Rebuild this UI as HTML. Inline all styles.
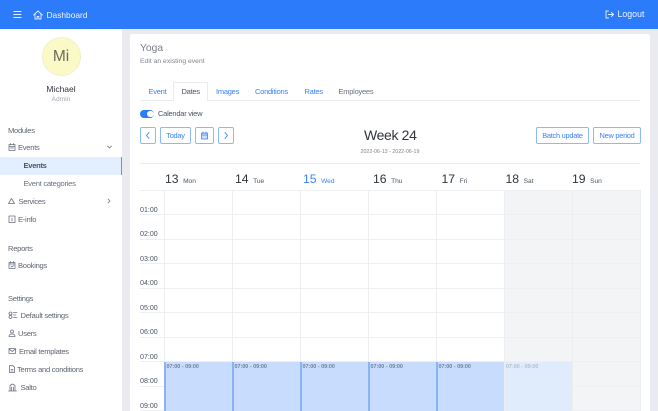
<!DOCTYPE html>
<html><head><meta charset="utf-8">
<style>
*{box-sizing:border-box}
html,body{margin:0;padding:0;width:658px;height:411px;overflow:hidden;background:#e9ebf0;font-family:"Liberation Sans",sans-serif}
#w{position:absolute;left:0;top:0;width:658px;height:411px;overflow:hidden;filter:blur(.35px)}
.a{position:absolute;white-space:nowrap}
.t{position:absolute;white-space:nowrap;line-height:12px;height:12px}
svg{position:absolute;fill:none;stroke-linecap:round;stroke-linejoin:round}
.side{color:#5f6672;font-size:7.600px;letter-spacing:-.28px}
.tab{font-size:7.500px;letter-spacing:-.25px;top:86px}
.btn{position:absolute;border:1px solid #8db8fb;border-radius:2px;color:#3b82f6;font-size:7.400px;letter-spacing:-.25px;text-align:center;background:#fff;height:17px;line-height:15px;white-space:nowrap}
.v{position:absolute;top:190px;width:1px;height:221px;background:#edeef1}
.h{position:absolute;left:140px;width:500px;height:1px;background:#eeeff2}
.tm{position:absolute;left:140px;font-size:7.100px;color:#4b5563;line-height:10px;white-space:nowrap}
.n{position:absolute;top:171px;font-size:12.200px;color:#2f343b;line-height:16px;white-space:nowrap}
.n small{font-size:6.600px;color:#4b5563;margin-left:4.500px}
.ev{position:absolute;top:362px;height:49px;width:68px;background:#c8dcfd;border-left:2px solid #8ab2f5;font-size:5.400px;font-weight:bold;color:#6f7f99;padding:1px 0 0 .5px;line-height:8px;white-space:nowrap}
</style></head><body><div id="w">
<div class="a" style="left:0;top:0;width:658px;height:29px;background:#2b7bfb"></div>
<svg style="left:13px;top:10px" width="9" height="9" stroke="#e8f0ff" stroke-width="1.100"><path d="M.8 1.500H8M.8 4.500H8M.8 7.500H8"/></svg>
<svg style="left:33px;top:10px" width="10" height="10" stroke="#e8f0ff" stroke-width=".9"><path d="M.7 5 5 1l4.300 4M2 4v5h2.200V6.500h1.600V9H8V4"/></svg>
<div class="t" style="left:46.500px;top:9px;color:#eef4ff;font-size:8.400px">Dashboard</div>
<svg style="left:605px;top:10px" width="9" height="9" stroke="#e8f0ff" stroke-width=".9"><path d="M3.500 1H1v7h2.500M3.500 4.500H8.500M6.500 2.500l2 2-2 2"/></svg>
<div class="t" style="left:617.500px;top:8px;color:#eef4ff;font-size:8.800px">Logout</div>

<div class="a" style="left:0;top:29px;width:122px;height:382px;background:#fff"></div>
<div class="a" style="left:41.500px;top:37px;width:39px;height:39px;border-radius:50%;background:#fbfac6;border:1px solid #f0efcc;text-align:center;line-height:37px;font-size:15.500px;color:#6b6b60">Mi</div>
<div class="t" style="left:0;width:122px;text-align:center;top:83px;font-size:8.500px;color:#30343b">Michael</div>
<div class="t" style="left:0;width:122px;text-align:center;top:93.500px;font-size:6.600px;color:#a0a5ad">Admin</div>
<div class="t side" style="left:8px;top:125px">Modules</div>
<svg style="left:7.500px;top:143px" width="8" height="8" stroke="#6b7280" stroke-width=".8"><path d="M1 1.500h6v6H1zM1 3.500h6M2.500.5v1.500M5.500.5v1.500M2.500 5h3"/></svg>
<div class="t side" style="left:18px;top:142px">Events</div>
<svg style="left:106px;top:144px" width="7" height="6" stroke="#6b7280" stroke-width=".8"><path d="M1.500 2 3.500 4 5.500 2"/></svg>
<div class="a" style="left:0;top:156.500px;width:122px;height:18px;background:#e3eefe;border-right:1.500px solid #5b95f7"></div>
<div class="t side" style="left:23.500px;top:160px;color:#4b5563;font-weight:bold;letter-spacing:-.3px">Events</div>
<div class="t side" style="left:23.500px;top:178px;color:#6b7280">Event categories</div>
<svg style="left:7px;top:197px" width="9" height="8" stroke="#6b7280" stroke-width=".8"><path d="M4.500 1.500 7.500 6.500H1.500z"/></svg>
<div class="t side" style="left:18.500px;top:196px">Services</div>
<svg style="left:106px;top:197px" width="6" height="8" stroke="#6b7280" stroke-width=".8"><path d="M2 2 4 4 2 6"/></svg>
<svg style="left:7.500px;top:215px" width="8" height="8" stroke="#6b7280" stroke-width=".8"><path d="M1 1h6v6.500H1zM4 3v3"/></svg>
<div class="t side" style="left:18px;top:214px">E-info</div>
<div class="t side" style="left:8px;top:243px">Reports</div>
<svg style="left:7.500px;top:261px" width="8" height="8" stroke="#6b7280" stroke-width=".8"><path d="M1 1.500h6v6H1zM1 3h6M2.500.5v1.500M5.500.5v1.500M3 5l1 1 1.500-1.500"/></svg>
<div class="t side" style="left:18px;top:260px">Bookings</div>
<div class="t side" style="left:8px;top:293px">Settings</div>
<svg style="left:7.500px;top:311px" width="10" height="8" stroke="#6b7280" stroke-width=".8"><path d="M1 2.500a1.500 1.500 0 1 0 3 0 1.500 1.500 0 1 0-3 0M1 6a1.500 1.500 0 1 0 3 0 1.500 1.500 0 1 0-3 0M5.500 1.500H9M5.500 4H8M5.500 6.500H9"/></svg>
<div class="t side" style="left:20.500px;top:310px">Default settings</div>
<svg style="left:7.500px;top:329px" width="8" height="8" stroke="#6b7280" stroke-width=".8"><path d="M2.500 2.500a1.500 1.500 0 1 0 3 0 1.500 1.500 0 1 0-3 0M1 7.500c0-2 1-2.500 3-2.500s3 .5 3 2.500z"/></svg>
<div class="t side" style="left:18px;top:328px">Users</div>
<svg style="left:7.500px;top:347px" width="9" height="8" stroke="#6b7280" stroke-width=".8"><path d="M1 1.500h6.500v5H1zM1 2l3.250 2.500L7.500 2"/></svg>
<div class="t side" style="left:19px;top:346px">Email templates</div>
<svg style="left:7.500px;top:365px" width="8" height="8" stroke="#6b7280" stroke-width=".8"><path d="M1.500.7H5L6.500 2.200V7.500h-5zM3 4.500h2M3 6h2"/></svg>
<div class="t side" style="left:17px;top:364px">Terms and conditions</div>
<svg style="left:7.500px;top:383px" width="9" height="9" stroke="#6b7280" stroke-width=".8"><path d="M.5 8h8M2 8V2.500L4.500 1 7 2.500V8M3.500 8V4M5.500 8V4"/></svg>
<div class="t side" style="left:20.500px;top:382px">Salto</div>

<div class="a" style="left:130px;top:34px;width:520px;height:377px;background:#fff;border-top-left-radius:2px;border-top-right-radius:2px"></div>
<div class="t" style="left:140px;top:43px;font-size:10.300px;color:#7a7f87">Yoga</div>
<div class="t" style="left:140px;top:56px;font-size:6.800px;color:#7f848c">Edit an existing event</div>

<div class="a" style="left:140px;top:100px;width:500px;height:1px;background:#e9ebee"></div>
<div class="a" style="left:173px;top:82px;width:35px;height:19px;background:#fff;border:1px solid #e9ebee;border-bottom:0"></div>
<div class="t tab" style="left:148.500px;color:#3b82f6">Event</div>
<div class="t tab" style="left:181.500px;color:#4b5563">Dates</div>
<div class="t tab" style="left:216px;color:#3b82f6">Images</div>
<div class="t tab" style="left:255px;color:#3b82f6">Conditions</div>
<div class="t tab" style="left:304.500px;color:#3b82f6">Rates</div>
<div class="t tab" style="left:338.500px;color:#6b7280">Employees</div>

<div class="a" style="left:140px;top:109.500px;width:14px;height:8.500px;border-radius:4.200px;background:#2b7bfb"></div>
<div class="a" style="left:147px;top:110.500px;width:6.500px;height:6.500px;border-radius:50%;background:#fff"></div>
<div class="t tab" style="left:158px;top:108px;color:#4b5563">Calendar view</div>

<div class="btn" style="left:140px;top:127px;width:16px"></div>
<svg style="left:144px;top:131px" width="8" height="9" stroke="#3b82f6" stroke-width=".9"><path d="M5 1.500 2.500 4.500 5 7.500"/></svg>
<div class="btn" style="left:160px;top:127px;width:31px">Today</div>
<div class="btn" style="left:195px;top:127px;width:19px"></div>
<svg style="left:200px;top:131px" width="9" height="9" stroke="#3b82f6" stroke-width=".8"><path d="M1.500 2h6v6h-6zM1.500 4h6M3 1v1.500M6 1v1.500" fill="#cfe0fd"/></svg>
<div class="btn" style="left:218px;top:127px;width:16px"></div>
<svg style="left:222px;top:131px" width="8" height="9" stroke="#3b82f6" stroke-width=".9"><path d="M3 1.500 5.500 4.500 3 7.500"/></svg>
<div class="btn" style="left:536px;top:127px;width:53px">Batch update</div>
<div class="btn" style="left:593px;top:127px;width:48px">New period</div>

<div class="a" style="left:364px;top:126px;font-size:14px;letter-spacing:-.35px;line-height:18px;color:#30343b">Week 24</div>
<div class="a" style="left:360.500px;top:148px;font-size:5.300px;line-height:8px;color:#7f848c">2022-06-13 - 2022-06-19</div>

<div class="a" style="left:140px;top:163px;width:500px;height:1px;background:#e9ebee"></div>
<div class="n" style="left:165px">13<small>Mon</small></div>
<div class="n" style="left:235px">14<small>Tue</small></div>
<div class="n" style="left:303px;color:#3b82f6">15<small style="color:#3b82f6">Wed</small></div>
<div class="n" style="left:373px">16<small>Thu</small></div>
<div class="n" style="left:441.500px">17<small>Fri</small></div>
<div class="n" style="left:505.500px">18<small>Sat</small></div>
<div class="n" style="left:572px">19<small>Sun</small></div>

<div class="a" style="left:504px;top:190px;width:136px;height:221px;background:#f3f4f6"></div>
<div class="h" style="top:190px"></div>
<div class="h" style="top:214px"></div>
<div class="h" style="top:239px"></div>
<div class="h" style="top:263px"></div>
<div class="h" style="top:288px"></div>
<div class="h" style="top:312px"></div>
<div class="h" style="top:337px"></div>
<div class="h" style="top:361px"></div>
<div class="h" style="top:386px"></div>
<div class="h" style="top:410px"></div>
<div class="v" style="left:164px"></div>
<div class="v" style="left:232px"></div>
<div class="v" style="left:300px"></div>
<div class="v" style="left:368px"></div>
<div class="v" style="left:436px"></div>
<div class="v" style="left:504px"></div>
<div class="v" style="left:572px"></div>
<div class="v" style="left:640px"></div>

<div class="tm" style="top:205px">01:00</div>
<div class="tm" style="top:229px">02:00</div>
<div class="tm" style="top:254px">03:00</div>
<div class="tm" style="top:278px">04:00</div>
<div class="tm" style="top:303px">05:00</div>
<div class="tm" style="top:327px">06:00</div>
<div class="tm" style="top:352px">07:00</div>
<div class="tm" style="top:376px">08:00</div>
<div class="tm" style="top:401px">09:00</div>

<div class="ev" style="left:164px">07:00 - 09:00</div>
<div class="ev" style="left:232px">07:00 - 09:00</div>
<div class="ev" style="left:300px">07:00 - 09:00</div>
<div class="ev" style="left:368px">07:00 - 09:00</div>
<div class="ev" style="left:436px">07:00 - 09:00</div>
<div class="ev" style="left:505px;background:#e0ebfc;border-left:0;color:#b4bdcc;width:67px;padding-left:1px">07:00 - 09:00</div>
</div></body></html>
